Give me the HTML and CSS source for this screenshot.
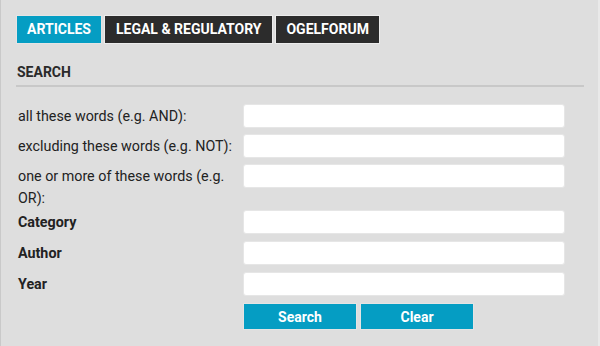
FILE: index.html
```html
<!DOCTYPE html>
<html>
<head>
<meta charset="utf-8">
<link rel="stylesheet" href="styles.css">
</head>
<body>
<div class="panel">
  <div class="tabs">
    <span class="tab active">ARTICLES</span>
    <span class="tab">LEGAL &amp; REGULATORY</span>
    <span class="tab">OGELFORUM</span>
  </div>
  <h2 class="heading">SEARCH</h2>
  <form class="form">
    <div class="row">
      <label class="label">all these words (e.g. AND):</label>
      <input class="field" type="text">
    </div>
    <div class="row">
      <label class="label">excluding these words (e.g. NOT):</label>
      <input class="field" type="text">
    </div>
    <div class="row row-tall">
      <label class="label">one or more of these words (e.g. OR):</label>
      <input class="field" type="text">
    </div>
    <div class="row row-b">
      <label class="label strong">Category</label>
      <input class="field" type="text">
    </div>
    <div class="row row-b">
      <label class="label strong">Author</label>
      <input class="field" type="text">
    </div>
    <div class="row row-b">
      <label class="label strong">Year</label>
      <input class="field" type="text">
    </div>
    <div class="actions">
      <button class="btn" type="button">Search</button>
      <button class="btn" type="button">Clear</button>
    </div>
  </form>
</div>
</body>
</html>
```

FILE: styles.css
```css
html, body {
  margin: 0;
  padding: 0;
}
body {
  background: #e9e9e9;
  font-family: Roboto, "Liberation Sans", sans-serif;
  width: 600px;
  height: 346px;
  overflow: hidden;
}
.panel {
  box-sizing: border-box;
  width: 598px;
  height: 346px;
  background: #dedede;
  border-left: 1px solid #c9c9c9;
  padding: 15px 14px 0 15px;
}
.tabs {
  display: flex;
  gap: 2px;
}
.tab {
  display: block;
  height: 29px;
  box-sizing: border-box;
  border: 1px solid #ececec;
  background: #2c2c2c;
  color: #fff;
  font-size: 14px;
  font-weight: 700;
  line-height: 27px;
  padding: 0 10px;
}
.tab.active {
  background: #059dc3;
  border-color: #e4e4e4;
}
.tab.active + .tab {
  padding: 0 11px;
}
.heading {
  margin: 20px 0 0 0;
  font-size: 14px;
  line-height: 16px;
  font-weight: 700;
  color: #2a2a2a;
  padding: 0 0 5px 1px;
  border-bottom: 2px solid #c8c8c8;
}
.form {
  margin-top: 17px;
}
.row {
  display: flex;
  align-items: flex-start;
  height: 30px;
}
.row-tall {
  height: 46px;
}
.row-b {
  height: 31px;
}
.label {
  box-sizing: border-box;
  width: 228px;
  flex: none;
  font-size: 14.3px;
  line-height: 22px;
  padding: 1px 0 0 2px;
  color: #222;
}
.label.strong {
  font-weight: 700;
}
.field {
  box-sizing: border-box;
  width: 322px;
  height: 24px;
  margin: 0 0 0 -1px;
  border: 1px solid #e6e6e6;
  border-radius: 3px;
  background: #fff;
  padding: 0 6px;
  font: inherit;
  outline: none;
}
.actions {
  display: flex;
  gap: 3px;
  margin-left: 227px;
  margin-top: 0;
}
.btn {
  box-sizing: border-box;
  width: 114px;
  height: 27px;
  border: 1px solid #e4e4e4;
  background: #059dc3;
  color: #fff;
  font-family: Roboto, "Liberation Sans", sans-serif;
  font-size: 14px;
  font-weight: 700;
  padding: 0;
  margin: 0;
}
```
